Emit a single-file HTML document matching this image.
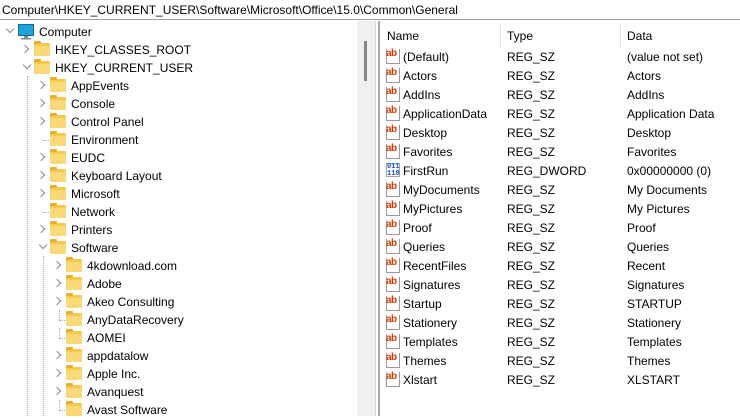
<!DOCTYPE html>
<html><head><meta charset="utf-8"><style>
*{margin:0;padding:0;box-sizing:border-box}
body{width:740px;height:416px;overflow:hidden;background:#fff;font-family:"Liberation Sans",sans-serif;font-size:12px;color:#000;position:relative}
.addr{position:absolute;left:0;top:0;width:740px;height:20px;border-bottom:1px solid #a0a0a0;padding:3px 0 0 2px;font-size:12px;white-space:nowrap}
.t{position:absolute;left:0;height:18px;width:356px;white-space:nowrap}
.t span.x{position:absolute;top:3px;font-size:12px}
.f{position:absolute;top:3px;width:16px;height:13px;background:#f6c94f;border-radius:1px}
.f:before{content:"";position:absolute;left:0;top:-2px;width:7px;height:3px;background:#e8b030;border-radius:1px 1px 0 0}
.f:after{content:"";position:absolute;left:0;top:3px;width:16px;height:10px;background:#fbd978;border-radius:1px}
.cr,.cd{position:absolute;top:6px;width:6px;height:6px;border-right:1.3px solid #888;border-bottom:1.3px solid #888}
.cr{transform:rotate(-45deg)}
.cd{transform:rotate(45deg);top:4px}
.vd{position:absolute;width:1px;border-left:1px dotted #aaa}
.hd{position:absolute;top:10px;height:1px;width:6px;border-top:1px dotted #aaa}
.sb{position:absolute;left:357px;top:21px;width:18px;height:395px;background:#f0f0f0}
.th{position:absolute;left:364px;top:41px;width:3px;height:40px;background:#858585}
.sp1{position:absolute;left:375px;top:21px;width:1px;height:395px;background:#d8d8d8}
.sp2{position:absolute;left:378px;top:21px;width:2px;height:395px;background:#a8a8a8}
.hdr{position:absolute;top:29px;font-size:12px}
.sep{position:absolute;top:24px;width:1px;height:24px;background:#e5e5e5}
.r{position:absolute;left:380px;height:19px;width:360px;white-space:nowrap;font-size:12px}
.r span{position:absolute;top:3px}
.ab{position:absolute;left:6px;top:2px;width:14px;height:15px;border:1px solid #9a9a9a;border-top:none;background:#fff}
.ab b{position:absolute;left:-1px;top:0;width:14px;height:9px;color:#d83b01;font-size:10px;line-height:9px;font-weight:bold;letter-spacing:-0.5px}
.bn{position:absolute;left:6px;top:2px;width:14px;height:14px;color:#1a4fd6;font-size:7px;line-height:7px;font-weight:bold;font-family:"Liberation Mono",monospace;border:1px solid #9aa;}
</style></head><body>
<div class="addr">Computer\HKEY_CURRENT_USER\Software\Microsoft\Office\15.0\Common\General</div>

<div class="vd" style="left:27px;top:76px;height:340px"></div>
<div class="vd" style="left:43px;top:256px;height:160px"></div>

<div class="t" style="top:22px"><div class="cd" style="left:7px"></div>
<svg style="position:absolute;left:18px;top:2px" width="16" height="16"><rect x="0.5" y="0.5" width="15" height="11" fill="#1fa2d8" stroke="#0b6c9e"/><rect x="6" y="12" width="4" height="2" fill="#888"/><rect x="3" y="14" width="10" height="1.5" fill="#888"/></svg>
<span class="x" style="left:39px">Computer</span></div>

<div class="t" style="top:40px"><div class="cr" style="left:22px"></div><div class="f" style="left:34px"></div><span class="x" style="left:55px">HKEY_CLASSES_ROOT</span></div>
<div class="t" style="top:58px"><div class="cd" style="left:24px"></div><div class="f" style="left:34px"></div><span class="x" style="left:55px">HKEY_CURRENT_USER</span></div>

<div class="t" style="top:76px"><div class="cr" style="left:38px"></div><div class="f" style="left:50px"></div><span class="x" style="left:71px">AppEvents</span></div>
<div class="t" style="top:94px"><div class="cr" style="left:38px"></div><div class="f" style="left:50px"></div><span class="x" style="left:71px">Console</span></div>
<div class="t" style="top:112px"><div class="cr" style="left:38px"></div><div class="f" style="left:50px"></div><span class="x" style="left:71px">Control Panel</span></div>
<div class="t" style="top:130px"><div class="hd" style="left:43px"></div><div class="f" style="left:50px"></div><span class="x" style="left:71px">Environment</span></div>
<div class="t" style="top:148px"><div class="cr" style="left:38px"></div><div class="f" style="left:50px"></div><span class="x" style="left:71px">EUDC</span></div>
<div class="t" style="top:166px"><div class="cr" style="left:38px"></div><div class="f" style="left:50px"></div><span class="x" style="left:71px">Keyboard Layout</span></div>
<div class="t" style="top:184px"><div class="cr" style="left:38px"></div><div class="f" style="left:50px"></div><span class="x" style="left:71px">Microsoft</span></div>
<div class="t" style="top:202px"><div class="hd" style="left:43px"></div><div class="f" style="left:50px"></div><span class="x" style="left:71px">Network</span></div>
<div class="t" style="top:220px"><div class="cr" style="left:38px"></div><div class="f" style="left:50px"></div><span class="x" style="left:71px">Printers</span></div>
<div class="t" style="top:238px"><div class="cd" style="left:40px"></div><div class="f" style="left:50px"></div><span class="x" style="left:71px">Software</span></div>

<div class="t" style="top:256px"><div class="cr" style="left:54px"></div><div class="f" style="left:66px"></div><span class="x" style="left:87px">4kdownload.com</span></div>
<div class="t" style="top:274px"><div class="cr" style="left:54px"></div><div class="f" style="left:66px"></div><span class="x" style="left:87px">Adobe</span></div>
<div class="t" style="top:292px"><div class="cr" style="left:54px"></div><div class="f" style="left:66px"></div><span class="x" style="left:87px">Akeo Consulting</span></div>
<div class="t" style="top:310px"><div class="hd" style="left:59px"></div><div class="vd" style="left:59px;top:0;height:10px"></div><div class="f" style="left:66px"></div><span class="x" style="left:87px">AnyDataRecovery</span></div>
<div class="t" style="top:328px"><div class="hd" style="left:59px"></div><div class="vd" style="left:59px;top:0;height:10px"></div><div class="f" style="left:66px"></div><span class="x" style="left:87px">AOMEI</span></div>
<div class="t" style="top:346px"><div class="cr" style="left:54px"></div><div class="f" style="left:66px"></div><span class="x" style="left:87px">appdatalow</span></div>
<div class="t" style="top:364px"><div class="cr" style="left:54px"></div><div class="f" style="left:66px"></div><span class="x" style="left:87px">Apple Inc.</span></div>
<div class="t" style="top:382px"><div class="cr" style="left:54px"></div><div class="f" style="left:66px"></div><span class="x" style="left:87px">Avanquest</span></div>
<div class="t" style="top:400px"><div class="hd" style="left:59px"></div><div class="vd" style="left:59px;top:0;height:10px"></div><div class="f" style="left:66px"></div><span class="x" style="left:87px">Avast Software</span></div>

<div class="sb"></div><div class="th"></div><div class="sp1"></div><div class="sp2"></div>

<div class="hdr" style="left:387px">Name</div>
<div class="sep" style="left:500px"></div>
<div class="hdr" style="left:507px">Type</div>
<div class="sep" style="left:620px"></div>
<div class="hdr" style="left:627px">Data</div>

<div class="r" style="top:47px"><div class="ab"><b>ab</b></div><span style="left:23px">(Default)</span><span style="left:127px">REG_SZ</span><span style="left:247px">(value not set)</span></div>
<div class="r" style="top:66px"><div class="ab"><b>ab</b></div><span style="left:23px">Actors</span><span style="left:127px">REG_SZ</span><span style="left:247px">Actors</span></div>
<div class="r" style="top:85px"><div class="ab"><b>ab</b></div><span style="left:23px">AddIns</span><span style="left:127px">REG_SZ</span><span style="left:247px">AddIns</span></div>
<div class="r" style="top:104px"><div class="ab"><b>ab</b></div><span style="left:23px">ApplicationData</span><span style="left:127px">REG_SZ</span><span style="left:247px">Application Data</span></div>
<div class="r" style="top:123px"><div class="ab"><b>ab</b></div><span style="left:23px">Desktop</span><span style="left:127px">REG_SZ</span><span style="left:247px">Desktop</span></div>
<div class="r" style="top:142px"><div class="ab"><b>ab</b></div><span style="left:23px">Favorites</span><span style="left:127px">REG_SZ</span><span style="left:247px">Favorites</span></div>
<div class="r" style="top:161px"><div class="bn">011<br>110</div><span style="left:23px">FirstRun</span><span style="left:127px">REG_DWORD</span><span style="left:247px">0x00000000 (0)</span></div>
<div class="r" style="top:180px"><div class="ab"><b>ab</b></div><span style="left:23px">MyDocuments</span><span style="left:127px">REG_SZ</span><span style="left:247px">My Documents</span></div>
<div class="r" style="top:199px"><div class="ab"><b>ab</b></div><span style="left:23px">MyPictures</span><span style="left:127px">REG_SZ</span><span style="left:247px">My Pictures</span></div>
<div class="r" style="top:218px"><div class="ab"><b>ab</b></div><span style="left:23px">Proof</span><span style="left:127px">REG_SZ</span><span style="left:247px">Proof</span></div>
<div class="r" style="top:237px"><div class="ab"><b>ab</b></div><span style="left:23px">Queries</span><span style="left:127px">REG_SZ</span><span style="left:247px">Queries</span></div>
<div class="r" style="top:256px"><div class="ab"><b>ab</b></div><span style="left:23px">RecentFiles</span><span style="left:127px">REG_SZ</span><span style="left:247px">Recent</span></div>
<div class="r" style="top:275px"><div class="ab"><b>ab</b></div><span style="left:23px">Signatures</span><span style="left:127px">REG_SZ</span><span style="left:247px">Signatures</span></div>
<div class="r" style="top:294px"><div class="ab"><b>ab</b></div><span style="left:23px">Startup</span><span style="left:127px">REG_SZ</span><span style="left:247px">STARTUP</span></div>
<div class="r" style="top:313px"><div class="ab"><b>ab</b></div><span style="left:23px">Stationery</span><span style="left:127px">REG_SZ</span><span style="left:247px">Stationery</span></div>
<div class="r" style="top:332px"><div class="ab"><b>ab</b></div><span style="left:23px">Templates</span><span style="left:127px">REG_SZ</span><span style="left:247px">Templates</span></div>
<div class="r" style="top:351px"><div class="ab"><b>ab</b></div><span style="left:23px">Themes</span><span style="left:127px">REG_SZ</span><span style="left:247px">Themes</span></div>
<div class="r" style="top:370px"><div class="ab"><b>ab</b></div><span style="left:23px">Xlstart</span><span style="left:127px">REG_SZ</span><span style="left:247px">XLSTART</span></div>
</body></html>
